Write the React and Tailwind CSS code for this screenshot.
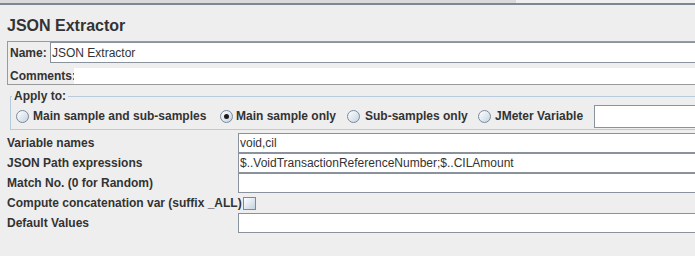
import React from "react";

function Radio({ checked }) {
  return (
    <span className="w-[13px] h-[13px] shrink-0 rounded-full border border-[#7a8a99] bg-linear-to-br from-white to-[#c5d4e3] flex items-center justify-center">
      {checked && <span className="w-[5px] h-[5px] rounded-full bg-[#1c1c1c]" />}
    </span>
  );
}

function Field({ value, className = "" }) {
  return (
    <div className={`flex-1 bg-white border border-r-0 border-[#8a939c] pl-[1px] flex items-center font-normal text-[#333] whitespace-nowrap ${className}`}>
      {value}
    </div>
  );
}

function Row({ label, value }) {
  return (
    <div className="flex h-[20px] items-stretch">
      <div className="w-[231px] flex items-center font-bold whitespace-nowrap">{label}</div>
      <Field value={value} />
    </div>
  );
}

export default function App() {
  return (
    <div className="w-[695px] h-[256px] overflow-hidden bg-[#eeeeee] text-[12px] leading-[14px] text-[#333] font-['Liberation_Sans',Arial,sans-serif]">
      <div className="w-[740px]">
        <div className="h-[3px] w-[516px] bg-[#d9d9d9]" />
        <div className="h-[2px] bg-[#7b8794]" />
        <div className="pl-[7px] pt-[11px] mb-[5px] h-[31px] text-[16px] leading-[20px] font-bold text-[#333]">
          JSON Extractor
        </div>

        <div className="ml-[7px] border border-[#9a9a9a] font-bold">
          <div className="flex h-[21px] items-stretch">
            <div className="w-[42px] pl-[2px] flex items-center">Name:</div>
            <Field value="JSON Extractor" className="pl-[1px]" />
          </div>
          <div className="flex h-[21px] items-stretch pt-[5px]">
            <div className="w-[66px] pl-[2px] flex items-center whitespace-nowrap">Comments:</div>
            <div className="flex-1 bg-white" />
          </div>
        </div>

        <fieldset className="ml-[10px] mt-[4px] border border-[#b8cbdc] font-bold">
          <legend className="ml-[1px] px-[2px] leading-[14px]">Apply to:</legend>
          <div className="flex h-[26px] items-center pl-[5px] whitespace-nowrap">
            <div className="w-[204px] flex items-center gap-[4px]">
              <Radio />
              <span>Main sample and sub-samples</span>
            </div>
            <div className="w-[127px] flex items-center gap-[3px]">
              <Radio checked />
              <span>Main sample only</span>
            </div>
            <div className="w-[131px] flex items-center gap-[5px]">
              <Radio />
              <span>Sub-samples only</span>
            </div>
            <div className="w-[116px] flex items-center gap-[4px]">
              <Radio />
              <span>JMeter Variable</span>
            </div>
            <Field value="" className="h-[23px] flex-1" />
          </div>
        </fieldset>

        <div className="mt-[3px] pl-[7px] flex flex-col">
          <Row label="Variable names" value="void,cil" />
          <Row label="JSON Path expressions" value="$..VoidTransactionReferenceNumber;$..CILAmount" />
          <Row label="Match No. (0 for Random)" value="" />
          <div className="flex h-[20px] items-center">
            <div className="w-[231px] font-bold whitespace-nowrap">Compute concatenation var (suffix _ALL)</div>
            <span className="ml-[5px] w-[13px] h-[13px] border border-[#7a8a99] bg-linear-to-br from-white to-[#c3d2e2]" />
          </div>
          <Row label="Default Values" value="" />
        </div>
      </div>
    </div>
  );
}
